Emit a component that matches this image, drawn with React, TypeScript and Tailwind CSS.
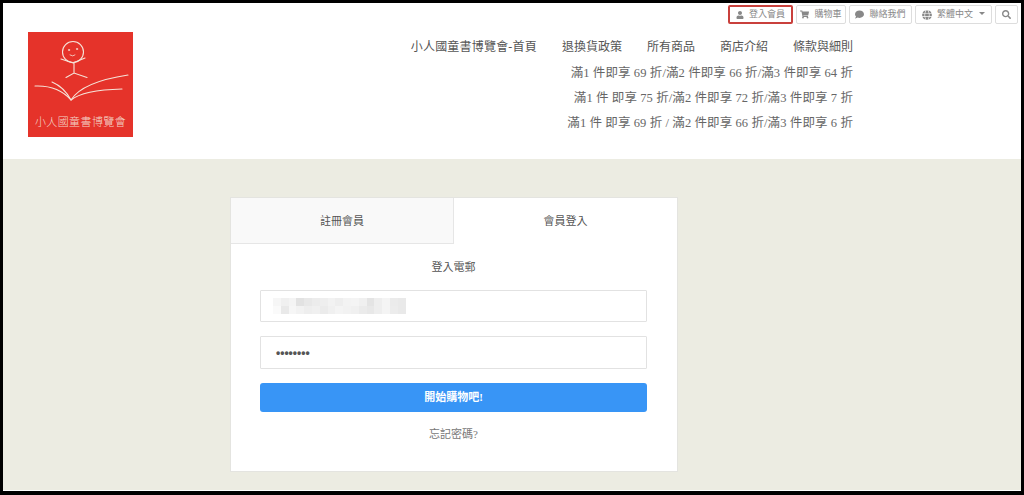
import type { ReactNode } from 'react';
import { FaUser, FaShoppingCart, FaComment, FaGlobe, FaSearch } from 'react-icons/fa';

const font = '[font-family:"Liberation_Serif","Noto_Sans_CJK_TC",serif]';

const navLinks = ['小人國童書博覽會-首頁', '退換貨政策', '所有商品', '商店介紹', '條款與細則'];

const promos = [
    '滿1 件即享 69 折/滿2 件即享 66 折/滿3 件即享 64 折',
    '滿1 件 即享 75 折/滿2 件即享 72 折/滿3 件即享 7 折',
    '滿1 件 即享 69 折 / 滿2 件即享 66 折/滿3 件即享 6 折'
];

const mosaic = [
    ['#f6f6f6', '#f0f0f0', '#f4f4f4', '#e2e2e2', '#e8e8e8', '#ececec', '#eeeeee', '#f2f2f2', '#eeeeee', '#f3f3f3', '#f4f4f4', '#f0f0f0', '#e4e4e4', '#eeeeee', '#f4f4f4', '#ebebeb', '#e9e9e9'],
    ['#fafafa', '#e9e9e9', '#f6f6f6', '#f2f2f2', '#eeeeee', '#f0f0f0', '#ebebeb', '#f0f0f0', '#f4f4f4', '#f2f2f2', '#f0f0f0', '#ebebeb', '#e8e8e8', '#eeeeee', '#f4f4f4', '#ececec', '#e9e9e9']
];

function TopButton({ icon, label, active, caret, className }: { icon: ReactNode; label?: string; active?: boolean; caret?: boolean; className: string }) {
    return (
        <button
            className={`flex items-center justify-center gap-[5px] h-[19px] rounded-[2px] bg-white text-[9px] text-[#888] border ${active ? 'border-2 border-[#c9403c]' : 'border-[#ddd]'} ${className}`}
        >
            {icon}
            {label}
            {caret && <span className="ml-[1px] mb-[3px] border-x-[3.5px] border-x-transparent border-t-[3.5px] border-t-[#888]" />}
        </button>
    );
}

function Logo() {
    return (
        <div className="flex flex-col items-center w-[105px] h-[105px] bg-[#e5332a] shrink-0">
            <svg viewBox="0 0 105 78" className="w-[105px] h-[78px]" fill="none" stroke="#f6e3d8" strokeLinecap="round">
                <circle cx="45" cy="20" r="10.5" strokeWidth="1.1" />
                <circle cx="41" cy="18" r="0.7" fill="#f6e3d8" strokeWidth="0.5" />
                <circle cx="49" cy="17" r="0.7" fill="#f6e3d8" strokeWidth="0.5" />
                <path d="M42 23q3 2 5 0" strokeWidth="0.8" />
                <path d="M46 30.5 46 41M33 27 45 31 57 26M38 45.5 46 41 59 45.5" strokeWidth="1.1" />
                <path d="M7 54Q30 53 43 68 54 50 100 43" strokeWidth="1.1" />
                <path d="M24 50Q36 55 43 68 55 58 94 57" strokeWidth="1.1" />
            </svg>
            <span className="text-[11px] leading-none tracking-[0.4px] text-[#f3d3c8] whitespace-nowrap mt-[6px] [font-family:'Noto_Sans_CJK_TC',sans-serif] font-light">
                小人國童書博覽會
            </span>
        </div>
    );
}

export default function App() {
    return (
        <div className={`flex flex-col w-[1024px] h-[495px] overflow-hidden bg-[#ecece2] border-t-[3px] border-l-[3px] border-r-[3px] border-b-[4px] border-black ${font}`}>
            {/* Header */}
            <header className="h-[156px] bg-white shrink-0">
                <div className="flex justify-end gap-[3px] pt-[2px] pr-[3px]">
                    <TopButton active className="w-[65px]" icon={<FaUser size={8} />} label="登入會員" />
                    <TopButton className="w-[50px]" icon={<FaShoppingCart size={9} />} label="購物車" />
                    <TopButton className="w-[63px]" icon={<FaComment size={9} />} label="聯絡我們" />
                    <TopButton caret className="w-[77px]" icon={<FaGlobe size={10} />} label="繁體中文" />
                    <TopButton className="w-[23px]" icon={<FaSearch size={9} />} />
                </div>

                <div className="flex pl-[25px] pr-[168px] pt-[8px]">
                    <Logo />
                    <div className="flex-1 flex flex-col items-end pt-[1px] text-[#666]">
                        <nav className="flex gap-[25px] h-[28px] items-center text-[12px] text-[#555]">
                            {navLinks.map(link => (
                                <span key={link} className="whitespace-nowrap first:tracking-[0.2px]">{link}</span>
                            ))}
                        </nav>
                        {promos.map(promo => (
                            <div key={promo} className="h-[25px] flex items-center whitespace-nowrap text-[12.5px] tracking-[0.1px]">{promo}</div>
                        ))}
                    </div>
                </div>
            </header>

            {/* Login card */}
            <main className="flex-1 pt-[38px] pl-[227px] border-b border-white">
                <div className="w-[448px] h-[275px] bg-white border border-[#e4e4e0]">
                    <div className="flex h-[46px] text-[11px] text-[#555]">
                        <div className="w-[223px] flex items-center justify-center pt-[1px] bg-[#f9f9f9] border-r border-b border-[#e6e6e6]">註冊會員</div>
                        <div className="flex-1 flex items-center justify-center pt-[1px]">會員登入</div>
                    </div>
                    <div className="flex flex-col pl-[29px] pr-[30px] text-[11px] text-[#555]">
                        <div className="h-[46px] flex items-center justify-center">登入電郵</div>
                        <div className="h-[32px] flex items-center pl-[12px] bg-white border border-[#e2e2e2] rounded-[1px]">
                            <div className="flex flex-col">
                                {mosaic.map((row, r) => (
                                    <div key={r} className="flex">
                                        {row.map((c, i) => (
                                            <div key={i} className="w-[7.8px] h-[8px]" style={{ backgroundColor: c }} />
                                        ))}
                                    </div>
                                ))}
                            </div>
                        </div>
                        <div className="h-[33px] mt-[14px] flex items-center pl-[15px] bg-white border border-[#e2e2e2] rounded-[1px] text-[#555] text-[12px] font-bold [font-family:'Liberation_Sans',sans-serif]">
                            ••••••••
                        </div>
                        <button className="h-[29px] mt-[14px] rounded-[3px] bg-[#3895f6] text-white font-bold text-[11px]">開始購物吧!</button>
                        <div className="mt-[14px] text-center text-[#777]">忘記密碼?</div>
                    </div>
                </div>
            </main>
        </div>
    );
}
